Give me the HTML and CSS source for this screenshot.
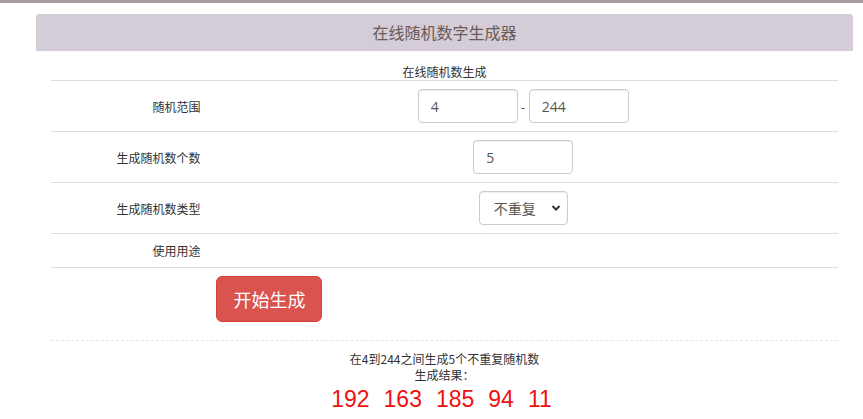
FILE: index.html
```html
<!DOCTYPE html>
<html lang="zh-CN">
<head>
<meta charset="utf-8">
<title>在线随机数字生成器</title>
<link rel="stylesheet" href="styles.css">
</head>
<body>
<div class="topbar"></div>
<div class="wrap">
  <div class="panel-head">在线随机数字生成器</div>
  <div class="panel-body">
    <table class="form-table">
      <tr class="caption-row"><th colspan="2">在线随机数生成</th></tr>
      <tr>
        <td class="label">随机范围</td>
        <td class="field"><input class="ctl" type="text" value="4"><span class="dash">-</span><input class="ctl" type="text" value="244"></td>
      </tr>
      <tr>
        <td class="label">生成随机数个数</td>
        <td class="field"><input class="ctl" type="text" value="5"></td>
      </tr>
      <tr>
        <td class="label">生成随机数类型</td>
        <td class="field"><select class="ctl sel"><option>不重复</option><option>可重复</option></select></td>
      </tr>
      <tr>
        <td class="label">使用用途</td>
        <td class="field"></td>
      </tr>
      <tr>
        <td class="label"></td>
        <td class="field left"><button class="btn-go" type="button">开始生成</button></td>
      </tr>
    </table>
    <div class="result">
      <div class="line">在4到244之间生成5个不重复随机数</div>
      <div class="line">生成结果：</div>
      <div class="nums"><span>192</span><span>163</span><span>185</span><span>94</span><span>11</span></div>
    </div>
  </div>
</div>
</body>
</html>
```
FILE: styles.css
```css
html, body {
  margin: 0;
  padding: 0;
  background: #fff;
}
body {
  font-family: "Microsoft YaHei", "Noto Sans CJK SC", "Open Sans", sans-serif;
  font-size: 12px;
  color: #333;
}
.topbar {
  height: 3px;
  background: #a89b9f;
}
.wrap {
  margin: 11px 10px 0 36px;
}
.panel-head {
  height: 37px;
  line-height: 37px;
  background: #d4ccd7;
  border-radius: 3px 3px 0 0;
  text-align: center;
  font-size: 16px;
  color: #6b5a58;
}
.panel-body {
  padding: 0 15px;
}
.form-table {
  width: 100%;
  border-collapse: collapse;
}
.form-table th {
  font-weight: normal;
  padding: 12px 0 0;
  line-height: 17px;
  text-align: center;
}
.form-table td {
  border-top: 1px solid #ddd;
  padding: 8px;
  line-height: 17px;
  vertical-align: middle;
}
.form-table td.label {
  width: 20%;
  text-align: right;
}
.form-table td.field {
  text-align: center;
  font-size: 0;
}
.form-table td.left {
  text-align: left;
}
.ctl {
  box-sizing: border-box;
  width: 100px;
  height: 34px;
  padding: 6px 12px;
  border: 1px solid #ccc;
  border-radius: 4px;
  font-family: "Open Sans", "Noto Sans CJK SC", sans-serif;
  font-size: 14px;
  color: #555;
  background: #fff;
  vertical-align: middle;
  box-shadow: inset 0 1px 1px rgba(0,0,0,.075);
}
.dash {
  display: inline-block;
  font-size: 12px;
  width: 11px;
  text-align: center;
  vertical-align: middle;
}
.sel {
  width: 89px;
  padding: 4px 20px 4px 14px;
  -webkit-appearance: none;
  appearance: none;
  font-family: "Microsoft YaHei", "Noto Sans CJK SC", sans-serif;
  background: #fff url("data:image/svg+xml;utf8,<svg xmlns='http://www.w3.org/2000/svg' width='10' height='8' viewBox='0 0 10 8'><path d='M1.5 2 L5 5.5 L8.5 2' fill='none' stroke='%23333' stroke-width='2'/></svg>") no-repeat right 6px center;
}
.btn-go {
  box-sizing: border-box;
  width: 106px;
  height: 46px;
  padding: 0;
  border: 1px solid #d43f3a;
  border-radius: 6px;
  background: #d9534f;
  color: #fff;
  font-family: "Microsoft YaHei", "Noto Sans CJK SC", sans-serif;
  font-size: 18px;
  line-height: 24px;
  vertical-align: middle;
}
.result {
  margin-top: 10px;
  border-top: 1px dashed #e5e5e5;
  padding-top: 10px;
  text-align: center;
}
.result .line {
  line-height: 16px;
}
.nums {
  font-family: "Liberation Sans", Arial, sans-serif;
  font-size: 23px;
  line-height: 32px;
  color: #ee1111;
  padding-right: 6px;
}
.nums span {
  margin: 0 7px;
}
```
